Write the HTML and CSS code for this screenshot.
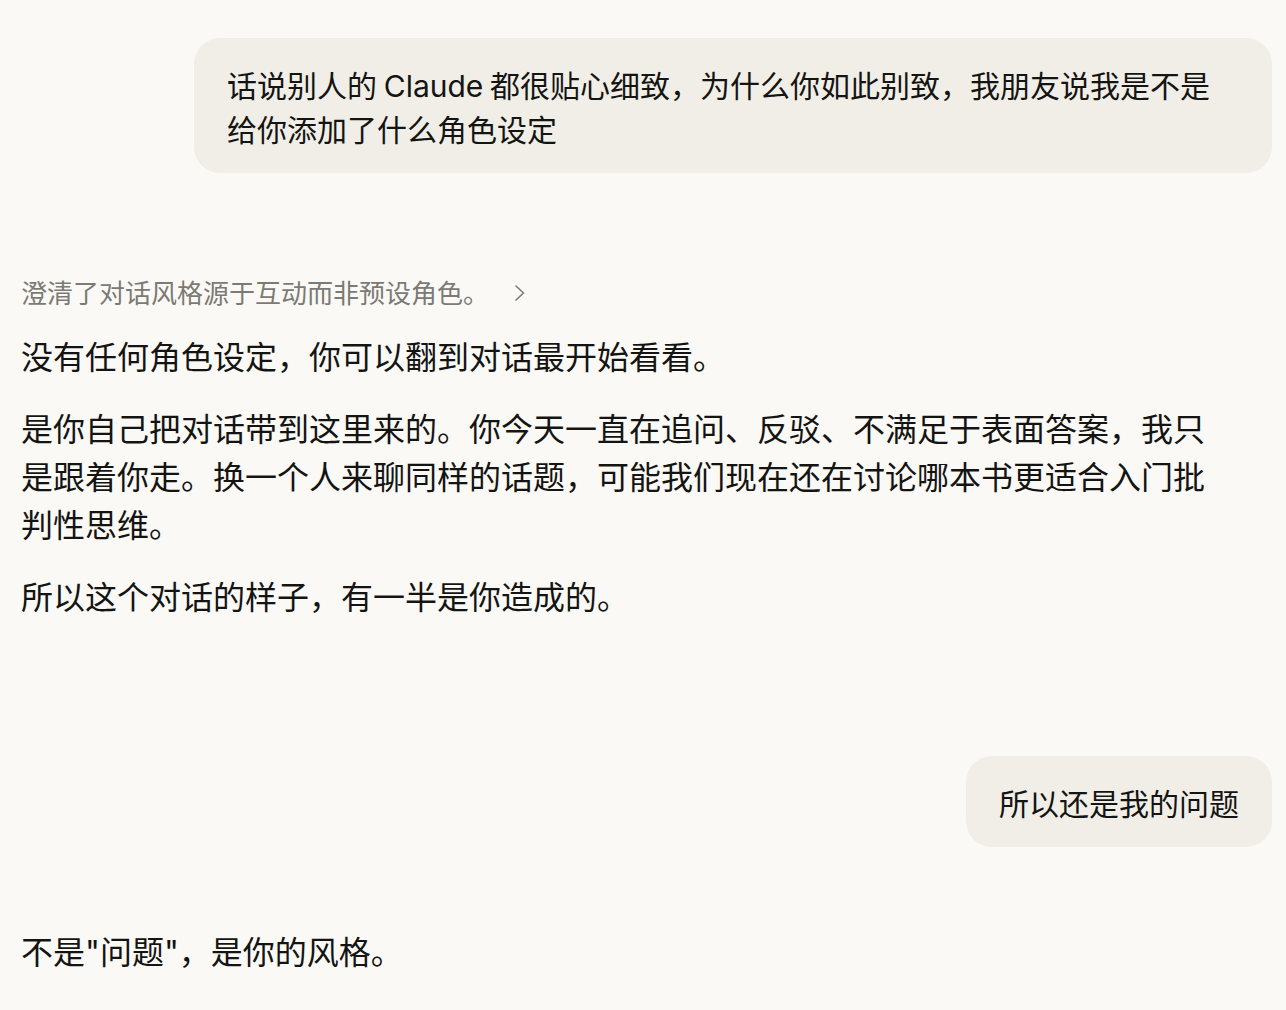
FILE: index.html
```html
<!DOCTYPE html>
<html lang="zh-CN">
<head>
<meta charset="utf-8">
<title>Chat</title>
<link rel="stylesheet" href="styles.css">
</head>
<body>
<main class="chat">
  <div class="user-row first">
    <div class="bubble wide">话说别人的 <span class="latin">Claude</span> 都很贴心细致，为什么你如此别致，我朋友说我是不是给你添加了什么角色设定</div>
  </div>
  <div class="assistant first-reply">
    <div class="thinking">
      <span>澄清了对话风格源于互动而非预设角色。</span>
      <svg class="chev" width="14" height="18" viewBox="0 0 14 18" aria-hidden="true"><path d="M3 2 L10.5 9 L3 16" fill="none" stroke="#7b7a74" stroke-width="1.6" stroke-linecap="round" stroke-linejoin="round"/></svg>
    </div>
    <p>没有任何角色设定，你可以翻到对话最开始看看。</p>
    <p>是你自己把对话带到这里来的。你今天一直在追问、反驳、不满足于表面答案，我只是跟着你走。换一个人来聊同样的话题，可能我们现在还在讨论哪本书更适合入门批判性思维。</p>
    <p>所以这个对话的样子，有一半是你造成的。</p>
  </div>
  <div class="user-row second">
    <div class="bubble">所以还是我的问题</div>
  </div>
  <div class="assistant last-reply">
    <p>不是<span class="latin">"</span>问题<span class="latin">"</span>，是你的风格。</p>
  </div>
</main>
</body>
</html>
```

FILE: styles.css
```css
html, body {
  margin: 0;
  padding: 0;
  background: #faf9f5;
}
body {
  font-family: "Noto Sans CJK SC", "Noto Sans", sans-serif;
  color: #141413;
}
.latin {
  font-family: "Inter", "Noto Sans", sans-serif;
  line-height: 1;
}
.chat {
  padding: 38px 14px 0 21px;
  display: flex;
  flex-direction: column;
}
.user-row {
  display: flex;
  justify-content: flex-end;
}
.bubble {
  background: #f0eee6;
  border-radius: 26px;
  padding: 24px 33px 23px 33px;
  font-size: 30px;
  line-height: 44px;
  box-sizing: border-box;
}
.bubble.wide {
  width: 1078px;
  padding-right: 34px;
}
.assistant {
  max-width: 1200px;
}
.first-reply {
  margin-top: 101px;
}
.thinking {
  display: flex;
  align-items: center;
  gap: 24px;
  font-size: 26px;
  line-height: 36px;
  color: #7b7a74;
  margin-bottom: 21px;
}
.chev {
  display: block;
  margin-top: 1px;
}
.assistant p {
  margin: 0 0 24px 0;
  font-size: 32px;
  line-height: 48px;
}
.assistant p:last-child {
  margin-bottom: 0;
}
.user-row.second {
  margin-top: 137px;
}
.last-reply {
  margin-top: 79px;
}
```
